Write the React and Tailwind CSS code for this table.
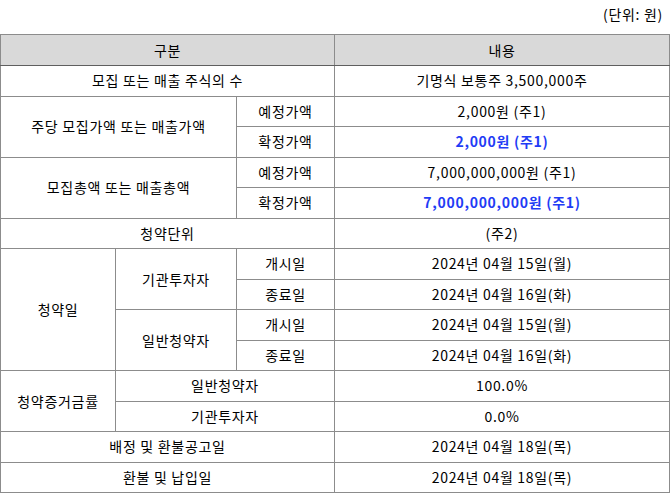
import React from "react";

const td = "border border-[#8c8c8c] text-center align-middle p-0";

const Row = ({ children, h = "h-[30.5px]" }) => <tr className={h}>{children}</tr>;

export default function App() {
  return (
    <div
      className="w-[671px] h-[493px] bg-white text-[14px] tracking-[0.7px] text-black overflow-hidden"
      style={{ fontFamily: '"Noto Sans CJK KR", "Noto Sans", sans-serif' }}
    >
      <div className="h-[34px] flex items-start justify-end pr-[8px] pt-[4px]">(단위: 원)</div>
      <table className="table-fixed border-collapse w-[670px] border-[1.5px] border-black">
        <colgroup>
          <col className="w-[115px]" />
          <col className="w-[121px]" />
          <col className="w-[98px]" />
          <col />
        </colgroup>
        <tbody>
          <tr className="h-[31px] bg-[#d9d9d9]">
            <td colSpan={3} className={`${td} border-b-[#5f5f5f]`}>구분</td>
            <td className={`${td} border-b-[#5f5f5f]`}>내용</td>
          </tr>
          <Row>
            <td colSpan={3} className={td}>모집 또는 매출 주식의 수</td>
            <td className={td}>기명식 보통주 3,500,000주</td>
          </Row>
          <Row>
            <td colSpan={2} rowSpan={2} className={td}>주당 모집가액 또는 매출가액</td>
            <td className={td}>예정가액</td>
            <td className={td}>2,000원 (주1)</td>
          </Row>
          <Row>
            <td className={td}>확정가액</td>
            <td className={`${td} font-bold text-[#1f3cf5]`}>2,000원 (주1)</td>
          </Row>
          <Row>
            <td colSpan={2} rowSpan={2} className={td}>모집총액 또는 매출총액</td>
            <td className={td}>예정가액</td>
            <td className={td}>7,000,000,000원 (주1)</td>
          </Row>
          <Row>
            <td className={td}>확정가액</td>
            <td className={`${td} font-bold text-[#1f3cf5]`}>7,000,000,000원 (주1)</td>
          </Row>
          <Row>
            <td colSpan={3} className={td}>청약단위</td>
            <td className={td}>(주2)</td>
          </Row>
          <Row>
            <td rowSpan={4} className={td}>청약일</td>
            <td rowSpan={2} className={td}>기관투자자</td>
            <td className={td}>개시일</td>
            <td className={td}>2024년 04월 15일(월)</td>
          </Row>
          <Row>
            <td className={td}>종료일</td>
            <td className={td}>2024년 04월 16일(화)</td>
          </Row>
          <Row>
            <td rowSpan={2} className={td}>일반청약자</td>
            <td className={td}>개시일</td>
            <td className={td}>2024년 04월 15일(월)</td>
          </Row>
          <Row>
            <td className={td}>종료일</td>
            <td className={td}>2024년 04월 16일(화)</td>
          </Row>
          <Row>
            <td rowSpan={2} className={td}>청약증거금률</td>
            <td colSpan={2} className={td}>일반청약자</td>
            <td className={td}>100.0%</td>
          </Row>
          <Row>
            <td colSpan={2} className={td}>기관투자자</td>
            <td className={td}>0.0%</td>
          </Row>
          <Row>
            <td colSpan={3} className={td}>배정 및 환불공고일</td>
            <td className={td}>2024년 04월 18일(목)</td>
          </Row>
          <Row>
            <td colSpan={3} className={td}>환불 및 납입일</td>
            <td className={td}>2024년 04월 18일(목)</td>
          </Row>
        </tbody>
      </table>
    </div>
  );
}
